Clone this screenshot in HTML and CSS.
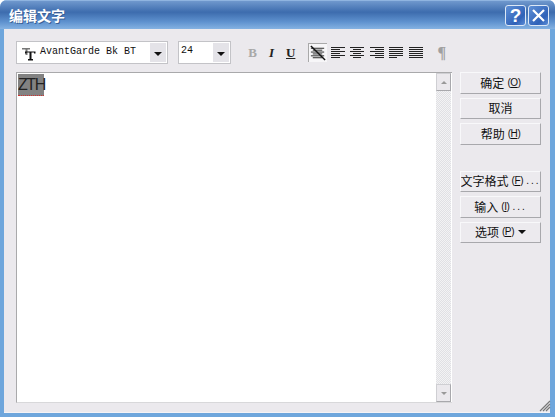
FILE: index.html
```html
<!DOCTYPE html>
<html lang="zh">
<head>
<meta charset="utf-8">
<title>编辑文字</title>
<link rel="stylesheet" href="styles.css">
</head>
<body>
<div class="window">
  <header class="titlebar">
    <span class="title">编辑文字</span>
    <div class="caption-buttons">
      <button class="cap">?</button>
      <button class="cap"><svg width="15" height="15" viewBox="0 0 15 15"><path d="M2 2l11 11M13 2L2 13" stroke="#fff" stroke-width="2.2" fill="none"/></svg></button>
    </div>
  </header>
  <div class="client">
    <div class="toolbar">
      <div class="combo font-combo">
        <svg class="tt" width="14" height="14" viewBox="0 0 14 14"><path d="M0 1h8v1.500H5.500V8H3.500V2.500H0z" fill="#777"/><path d="M3 4.500h10.500v2H12V5.500H9.500V12H11v1.500H6V12h1.500V5.500H4.500v1H3z" fill="#111"/></svg>
        <span class="combo-text">AvantGarde Bk BT</span>
        <span class="combo-btn"><i class="arrow"></i></span>
      </div>
      <div class="combo size-combo">
        <span class="combo-text">24</span>
        <span class="combo-btn"><i class="arrow"></i></span>
      </div>
      <div class="styles">
        <span class="st bold">B</span>
        <span class="st italic">I</span>
        <span class="st under">U</span>
      </div>
      <div class="aligns">
        <svg class="al active" width="19" height="19" viewBox="0 0 19 19"><path d="M2 4.500h14M4 6.500h10M2 8.500h14M4 10.500h10M2 12.500h14M4 14.500h10" stroke="#222" fill="none"/><path d="M2 2l15 15" stroke="#111" stroke-width="1.500"/></svg>
        <svg class="al" width="19" height="19" viewBox="0 0 19 19"><path d="M3 4.500h14M3 6.500h9M3 8.500h14M3 10.500h9M3 12.500h14M3 14.500h9" stroke="#222" fill="none"/></svg>
        <svg class="al" width="19" height="19" viewBox="0 0 19 19"><path d="M3 4.500h14M6 6.500h8M3 8.500h14M6 10.500h8M3 12.500h14M6 14.500h8" stroke="#222" fill="none"/></svg>
        <svg class="al" width="19" height="19" viewBox="0 0 19 19"><path d="M3 4.500h14M8 6.500h9M3 8.500h14M8 10.500h9M3 12.500h14M8 14.500h9" stroke="#222" fill="none"/></svg>
        <svg class="al" width="19" height="19" viewBox="0 0 19 19"><path d="M3 4.500h14M3 6.500h14M3 8.500h14M3 10.500h14M3 12.500h14M3 14.500h8" stroke="#222" fill="none"/></svg>
        <svg class="al" width="19" height="19" viewBox="0 0 19 19"><path d="M3 4.500h14M3 6.500h14M3 8.500h14M3 10.500h14M3 12.500h14M3 14.500h14" stroke="#222" fill="none"/></svg>
      </div>
      <span class="pilcrow">¶</span>
    </div>
    <div class="main">
      <div class="editor">
        <div class="text-area"><span class="sel">ZTH</span></div>
        <div class="scrollbar">
          <span class="sb-btn"><i class="sb-up"></i></span>
          <span class="sb-track"></span>
          <span class="sb-btn"><i class="sb-down"></i></span>
        </div>
      </div>
      <div class="buttons">
        <div class="group">
          <button class="btn">确定<span class="key">(<u>O</u>)</span></button>
          <button class="btn">取消</button>
          <button class="btn">帮助<span class="key">(<u>H</u>)</span></button>
        </div>
        <div class="group">
          <button class="btn">文字格式<span class="key">(<u>F</u>)</span><span class="dots">...</span></button>
          <button class="btn">输入<span class="key">(<u>I</u>)</span><span class="dots">...</span></button>
          <button class="btn">选项<span class="key">(<u>P</u>)</span><i class="arrow"></i></button>
        </div>
      </div>
    </div>
    <svg class="grip" width="13" height="13" viewBox="0 0 13 13"><path d="M12 2L2 12M12 5L5 12M12 8L8 12" stroke="#777" stroke-width="1.200" fill="none"/></svg>
  </div>
</div>
</body>
</html>
```
FILE: styles.css
```css
* { box-sizing: border-box; }
html, body { margin: 0; padding: 0; }
body { width: 555px; height: 417px; overflow: hidden; background: #fff; font-family: "Noto Sans CJK SC", "Liberation Sans", sans-serif; }
.window {
  width: 555px; height: 417px; display: flex; flex-direction: column;
  background: #6ea6dc; border-radius: 7px 7px 0 0; overflow: hidden;
}
.titlebar {
  height: 29px; flex: none; display: flex; align-items: center; justify-content: space-between;
  padding: 0 6px 0 9px;
  background: linear-gradient(#6f98cd 0, #3d6cae 40%, #5f92cf 75%, #84b2e2 100%);
  border-top: 1px solid #8fb4e0;
}
.title { color: #fff; font-size: 14px; font-weight: 700; letter-spacing: 0; text-shadow: 1px 1px 0 #3a5f95; }
.caption-buttons { display: flex; gap: 2px; }
.cap {
  width: 21px; height: 21px; padding: 0; border: 1px solid #dce8f6; border-radius: 3px;
  background: linear-gradient(135deg, #5f90d6, #2f62b8 70%, #5c8dd6);
  color: #fff; font: 700 19px/19px "Liberation Sans", sans-serif;
  display: flex; align-items: center; justify-content: center;
}
.client {
  flex: 1; position: relative; margin: 0 5px 4px 4px; background: #ebe9ed;
  padding: 12px 9px 0 12px; display: flex; flex-direction: column;
  border-bottom: 1px solid #f4f3f6;
}
.toolbar { display: flex; align-items: center; height: 23px; flex: none; }
.combo {
  height: 23px; display: flex; align-items: center; background: #fff;
  border: 1px solid #c3c3c7; position: relative;
}
.font-combo { width: 152px; margin-right: 10px; padding-left: 5px; }
.size-combo { width: 53px; padding-left: 2px; margin-right: 17px; }
.tt { flex: none; margin: 3px 4px 0 0; }
.combo-text { flex: 1; font: 10px/14px "Liberation Mono", monospace; color: #111; white-space: nowrap; margin-top: -1px; }
.size-combo .combo-text { margin-top: -3px; }
.combo-btn {
  position: absolute; right: 1px; top: 1px; width: 16px; height: 19px; background: #e4e3e8;
  display: flex; align-items: center; justify-content: center; padding-top: 3px;
}
.arrow {
  display: inline-block; flex: none; width: 0; height: 0; border: 4px solid transparent; border-top: 4px solid #111; border-bottom: 0;
  vertical-align: middle;
}
.styles { display: flex; gap: 10px; width: 60px; font: 700 13px/14px "Liberation Serif", serif; }
.st { width: 9px; text-align: center; }
.bold { color: #a8a8a8; }
.italic { color: #222; font-style: italic; }
.under { color: #222; text-decoration: underline; }
.aligns { display: flex; gap: 0.500px; }
.al { flex: none; }
.active { background: #f7f6f8; border-left: 1px solid #a9a9a9; border-top: 1px solid #a9a9a9; }
.pilcrow { margin-left: 13px; color: #a0a0a0; font: 700 16px/14px "Liberation Serif", serif; }
.main { flex: 1; display: flex; margin-top: 8px; margin-bottom: 9px; gap: 8px; min-height: 0; }
.editor { width: 436px; display: flex; background: #fff; border-top: 1px solid #a9a9ab; border-left: 1px solid #a9a9ab; border-bottom: 1px solid #d8d8da; }
.text-area { flex: 1; padding: 1px; font: 16px/21px "Liberation Sans", sans-serif; }
.sel {
  display: inline-block; height: 22px; background: #828282; color: #222; font-weight: 400; letter-spacing: -1.400px;
  width: 26px; white-space: nowrap;
  border-bottom: 1px dotted #d03030;
}
.scrollbar { width: 16px; padding-right: 1px; display: flex; flex-direction: column;
  background: repeating-conic-gradient(#f3f3f4 0 25%, #e0e0e4 0 50%) 0 0 / 2px 2px;
  background-clip: content-box;
}
.sb-btn { height: 18px; flex: none; background: #ebe9ed; border: 1px solid #cfcfd3; border-right-color: #a8a8ac; border-bottom-color: #a8a8ac; display: flex; align-items: center; justify-content: center; }
.sb-track { flex: 1; }
.sb-up, .sb-down { width: 0; height: 0; border: 3px solid transparent; }
.sb-up { border-bottom: 3px solid #999; border-top: 0; }
.sb-down { border-top: 3px solid #999; border-bottom: 0; }
.buttons { width: 81px; display: flex; flex-direction: column; gap: 26px; }
.group { display: flex; flex-direction: column; gap: 4px; }
.btn {
  height: 21.500px; padding: 0; width: 81px; white-space: nowrap; overflow: hidden;
  background: #eceaee; color: #111;
  border: 1px solid #f8f8fa; border-right-color: #a8a8ac; border-bottom-color: #a8a8ac;
  font: 12px/18px "Noto Sans CJK SC", "Liberation Sans", sans-serif;
  display: flex; align-items: center; justify-content: center; gap: 0;
}
.key { font: 10px/14px "Liberation Sans", sans-serif; letter-spacing: -0.4px; margin-left: 3px; }
.key u { text-underline-offset: 1px; }
.dots { font: 10px/14px "Liberation Sans", sans-serif; letter-spacing: 2px; margin-left: 3px; }
.btn .arrow { margin-left: 4px; }
.grip { position: absolute; right: -1px; bottom: 0; }
```
